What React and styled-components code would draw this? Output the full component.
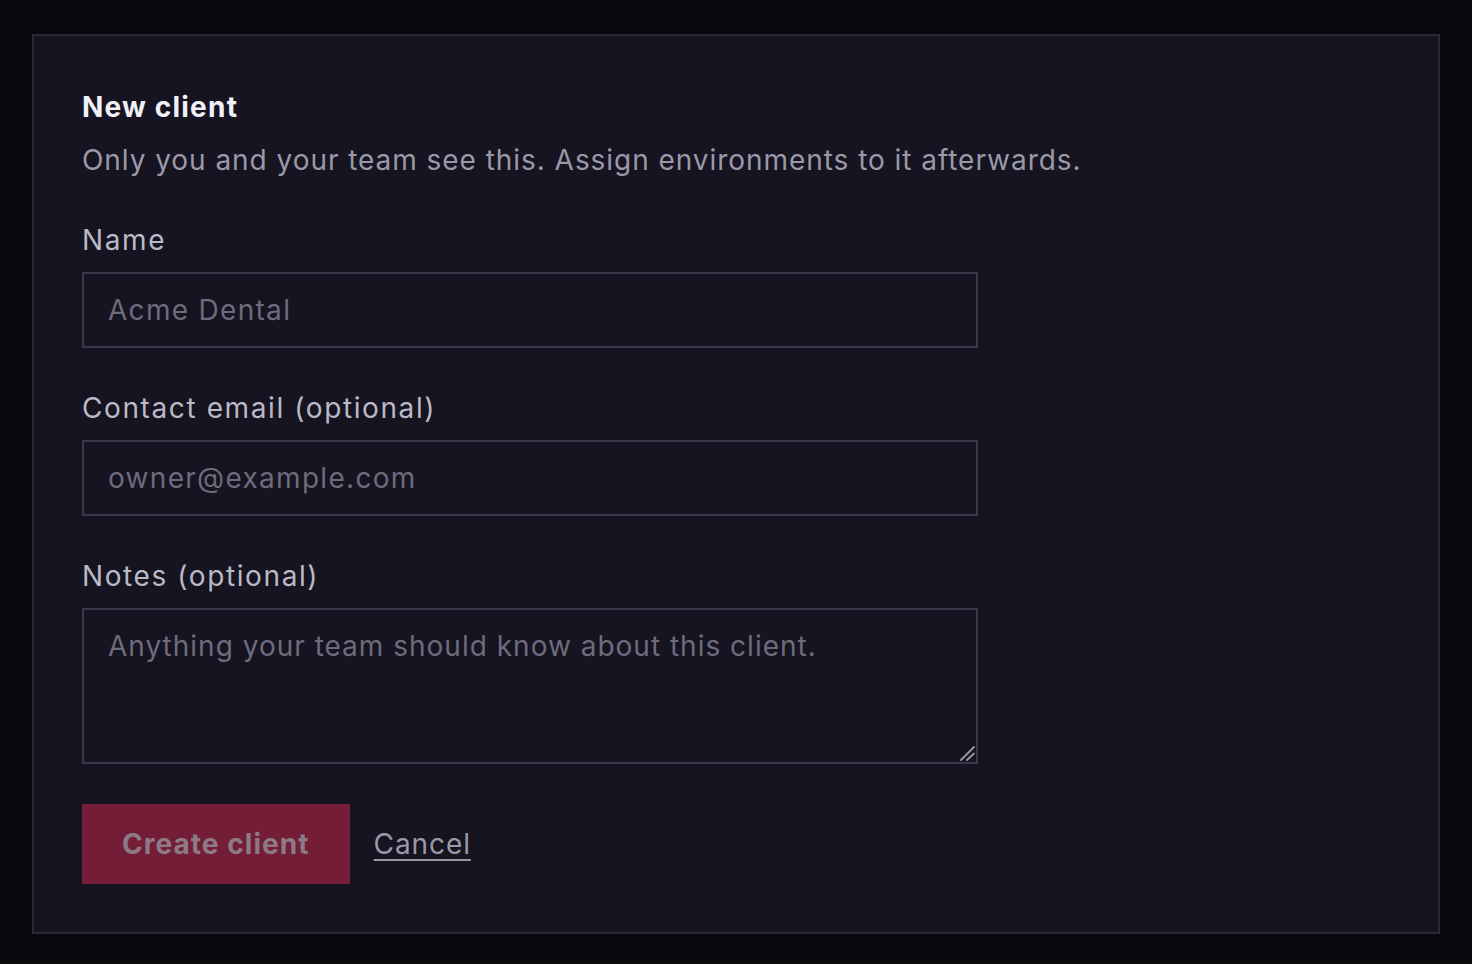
import React from "react";
import styled, { createGlobalStyle } from "styled-components";

const Global = createGlobalStyle`
  html, body { margin: 0; padding: 0; background: #09080d; }
  body { font-family: Inter, "Noto Sans", sans-serif; }
  * { box-sizing: border-box; }
`;

const Page = styled.div`
  padding: 34px 32px 30px;
  min-height: 964px;
`;

const Card = styled.form`
  background: #151420;
  border: 2px solid #2a2839;
  padding: 48px;
  display: flex;
  flex-direction: column;
`;

const Title = styled.h2`
  margin: 0;
  font-size: 28px;
  line-height: 46px;
  font-weight: 700;
  color: #f1f0f6;
  letter-spacing: 1.2px;
`;

const Subtitle = styled.p`
  margin: 10px 0 40px;
  font-size: 28px;
  line-height: 40px;
  color: #9b99a9;
  letter-spacing: 0.95px;
`;

const Fields = styled.div`
  display: flex;
  flex-direction: column;
  gap: 40px;
  max-width: 896px;
`;

const Field = styled.label`
  display: flex;
  flex-direction: column;
  gap: 12px;
`;

const LabelText = styled.span`
  font-size: 28px;
  line-height: 40px;
  color: #bbb9c7;
  letter-spacing: 1.6px;
`;

const inputStyles = `
  width: 100%;
  background: #151420;
  border: 2px solid #3b384e;
  border-radius: 0;
  color: #e6e4ee;
  font-family: Inter, "Noto Sans", sans-serif;
  font-size: 28px;
  letter-spacing: 1.3px;
  padding: 0 24px;
  outline: none;
  &::placeholder { color: #6e6b7d; opacity: 1; }
`;

const Input = styled.input`
  ${inputStyles}
  height: 76px;
`;

const AreaWrap = styled.div`
  position: relative;
`;

const TextArea = styled.textarea`
  ${inputStyles}
  letter-spacing: 1.0px;
  height: 156px;
  padding-top: 16px;
  line-height: 40px;
  resize: vertical;
  display: block;
`;

const Grip = styled.svg`
  position: absolute;
  right: 2px;
  bottom: 2px;
  width: 18px;
  height: 18px;
  pointer-events: none;
  background: #151420;
`;

const Actions = styled.div`
  display: flex;
  align-items: center;
  gap: 24px;
  margin-top: 40px;
`;

const PrimaryButton = styled.button`
  height: 80px;
  padding: 0 40px;
  background: #731e36;
  border: none;
  border-radius: 0;
  color: #8c7b86;
  font-family: Inter, "Noto Sans", sans-serif;
  font-size: 28px;
  font-weight: 700;
  letter-spacing: 1.05px;
  cursor: not-allowed;
`;

const CancelLink = styled.a`
  font-size: 28px;
  color: #9b99a9;
  text-decoration: underline;
  text-underline-offset: 5px;
  text-decoration-thickness: 2px;
  letter-spacing: 0.9px;
  cursor: pointer;
`;

export default function App() {
  return (
    <>
      <Global />
      <Page>
        <Card onSubmit={(e) => e.preventDefault()}>
          <Title>New client</Title>
          <Subtitle>Only you and your team see this. Assign environments to it afterwards.</Subtitle>
          <Fields>
            <Field>
              <LabelText>Name</LabelText>
              <Input placeholder="Acme Dental" />
            </Field>
            <Field>
              <LabelText>Contact email (optional)</LabelText>
              <Input placeholder="owner@example.com" />
            </Field>
            <Field>
              <LabelText>Notes (optional)</LabelText>
              <AreaWrap>
                <TextArea placeholder="Anything your team should know about this client." />
                <Grip viewBox="0 0 18 18" aria-hidden="true">
                  <path d="M3 16 L16 3" stroke="#9c9aa8" strokeWidth="1.8" strokeLinecap="round" />
                  <path d="M9 16 L16 9.5" stroke="#9c9aa8" strokeWidth="1.8" strokeLinecap="round" />
                </Grip>
              </AreaWrap>
            </Field>
          </Fields>
          <Actions>
            <PrimaryButton type="submit" disabled>Create client</PrimaryButton>
            <CancelLink>Cancel</CancelLink>
          </Actions>
        </Card>
      </Page>
    </>
  );
}
